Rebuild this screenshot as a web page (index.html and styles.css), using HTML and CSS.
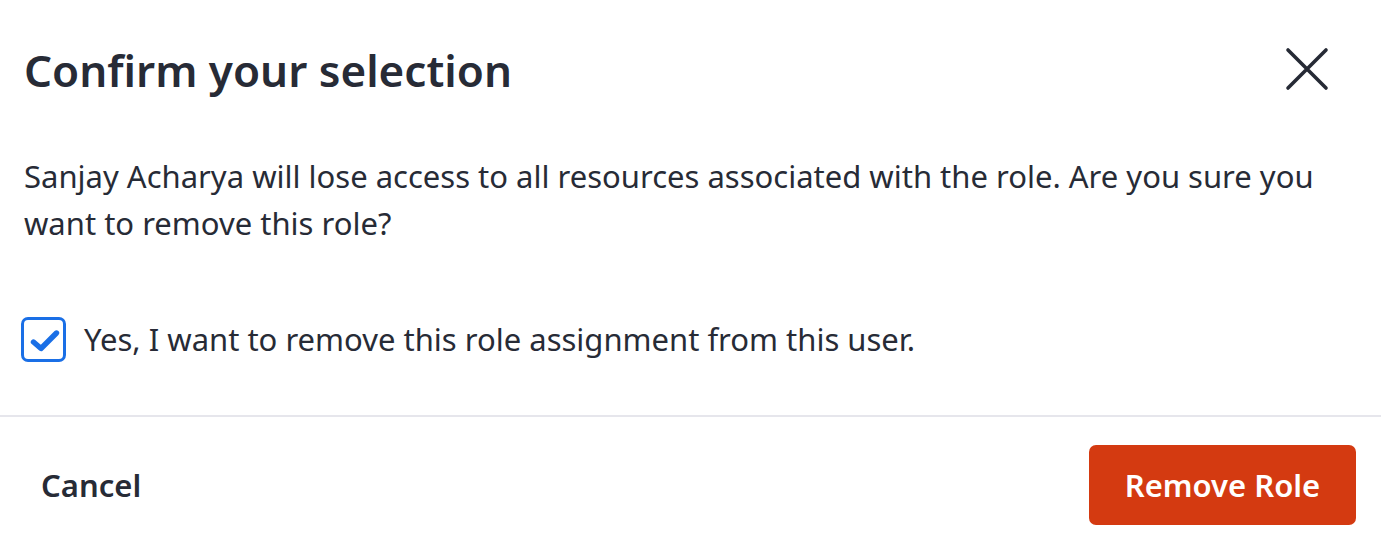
FILE: index.html
```html
<!DOCTYPE html>
<html lang="en">
<head>
<meta charset="utf-8">
<link rel="stylesheet" href="styles.css">
</head>
<body>
<div class="dialog">
  <div class="header">
    <h1 class="title">Confirm your selection</h1>
    <button class="close" aria-label="Close">
      <svg width="44" height="44" viewBox="0 0 44 44"><path d="M3 3 L41 41 M41 3 L3 41" stroke="#262a35" stroke-width="3.6" stroke-linecap="round" fill="none"/></svg>
    </button>
  </div>
  <div class="body">
    <p class="message">Sanjay Acharya will lose access to all resources associated with the role. Are you sure you want to remove this role?</p>
    <label class="check-row">
      <span class="checkbox">
        <svg width="38" height="38" viewBox="0 0 38 38"><path d="M8.5 21 L16 27.5 L31.5 12" stroke="#1a6fe6" stroke-width="5.4" stroke-linecap="round" stroke-linejoin="round" fill="none"/></svg>
      </span>
      <span class="check-label">Yes, I want to remove this role assignment from this user.</span>
    </label>
  </div>
  <div class="footer">
    <button class="cancel">Cancel</button>
    <button class="remove">Remove Role</button>
  </div>
</div>
</body>
</html>
```
FILE: styles.css
```css
* { box-sizing: border-box; }
html, body { margin: 0; padding: 0; background: #fff; }
body {
  font-family: "Noto Sans", "Open Sans", sans-serif;
  color: #272b36;
}
.dialog { width: 1381px; }
.header {
  display: flex;
  align-items: flex-start;
  justify-content: space-between;
  padding: 42px 24px 0 24px;
  height: 120px;
}
.title {
  margin: 0;
  font-size: 44px;
  font-weight: 600;
  line-height: 56px;
}
.close {
  border: 0;
  background: none;
  padding: 0;
  margin: 5px 28px 0 0;
  width: 44px;
  height: 44px;
  display: flex;
}
.body { padding: 33px 24px 0 24px; }
.message {
  margin: 0;
  font-size: 31px;
  line-height: 47px;
}
.check-row {
  display: flex;
  align-items: center;
  gap: 18px;
  margin-top: 70px;
}
.checkbox {
  width: 45px;
  height: 45px;
  border: 3.8px solid #1a6fe6;
  border-radius: 7px;
  display: flex;
  align-items: center;
  justify-content: center;
  margin-left: -3px;
}
.check-label { font-size: 31px; line-height: 45px; }
.footer {
  margin-top: 53px;
  border-top: 2px solid #e6e6ec;
  display: flex;
  justify-content: space-between;
  align-items: center;
  padding: 28px 25px 19px 24px;
}
.cancel {
  font-family: inherit;
  border: 0;
  background: none;
  color: #272b36;
  font-size: 31px;
  font-weight: 600;
  padding: 0 17px;
  height: 80px;
}
.remove {
  font-family: inherit;
  border: 0;
  background: #d43a11;
  color: #fff;
  font-size: 31px;
  font-weight: 600;
  border-radius: 7px;
  width: 267px;
  height: 80px;
}
```
